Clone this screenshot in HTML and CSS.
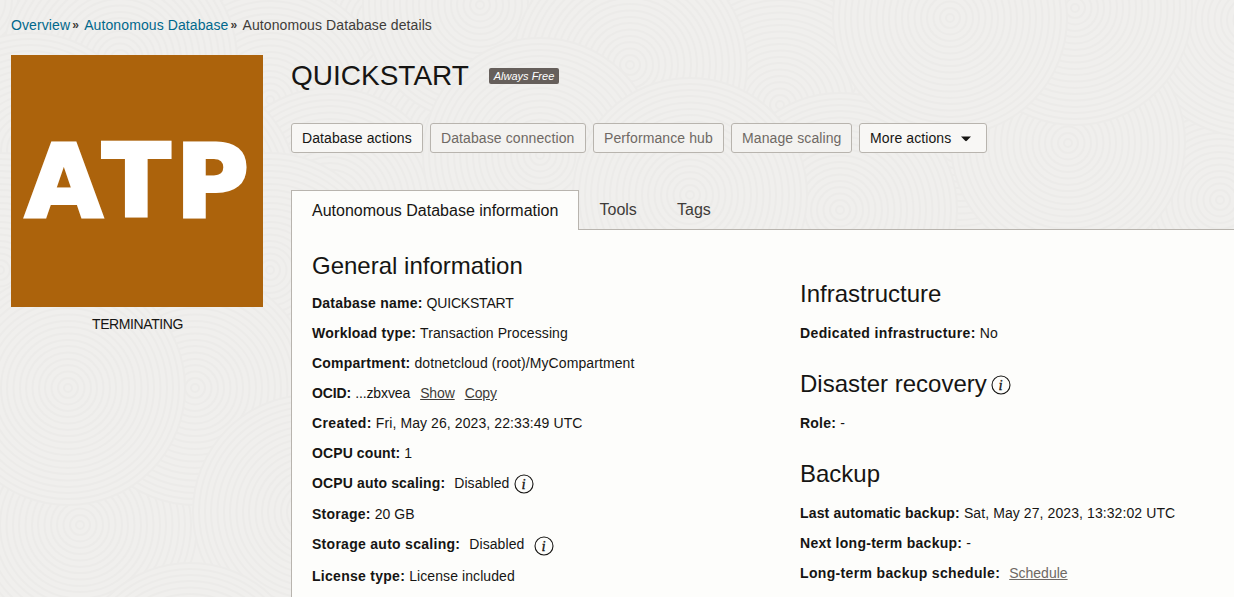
FILE: index.html
```
<!DOCTYPE html>
<html lang="en">
<head>
<meta charset="utf-8">
<title>Autonomous Database details</title>
<link rel="stylesheet" href="styles.css">
</head>
<body>
<svg class="texture" width="1234" height="597" aria-hidden="true">
  <defs>
    <g id="disc">
      <circle r="117" class="base"/>
      <circle r="4"/><circle r="10"/><circle r="16.5"/><circle r="23"/><circle r="29"/><circle r="35.5"/><circle r="42"/><circle r="48"/><circle r="54.5"/><circle r="61"/><circle r="67"/><circle r="73.5"/><circle r="80"/><circle r="86"/><circle r="92.5"/><circle r="99"/><circle r="105"/><circle r="111"/><circle r="117"/>
    </g>
    <g id="cluster">
      <use href="#disc" x="440" y="30"/><use href="#disc" x="30" y="10"/>
      <use href="#disc" x="330" y="110"/><use href="#disc" x="510" y="145"/>
      <use href="#disc" x="180" y="70"/><use href="#disc" x="90" y="160"/>
      <use href="#disc" x="390" y="215"/><use href="#disc" x="240" y="200"/>
    </g>
  </defs>
  <use href="#cluster" x="-60" y="-10"/>
  <use href="#cluster" x="450" y="-5"/>
  <use href="#disc" x="1220" y="200"/>
  <use href="#disc" x="1250" y="20"/>
  <use href="#disc" x="1068" y="143"/>
  <use href="#disc" x="1075" y="8"/>
  <use href="#disc" x="950" y="18"/>
  <use href="#disc" x="0" y="270"/>
  <use href="#disc" x="270" y="270"/>
  <use href="#disc" x="0" y="520"/>
  <use href="#disc" x="80" y="525"/>
  <use href="#disc" x="195" y="388"/>
  <use href="#disc" x="310" y="512"/>
  <use href="#disc" x="68" y="388"/>
  <use href="#disc" x="190" y="680"/>
</svg>
<div class="page">
  <nav class="crumbs"><a>Overview</a><span class="sep">»</span><a>Autonomous Database</a><span class="sep">»</span><span>Autonomous Database details</span></nav>
  <div class="layout">
    <aside class="side">
      <svg class="tile" width="252" height="252" viewBox="0 0 252 252"><text y="161" x="14.4 91.4 165">ATP</text></svg>
      <div class="state">TERMINATING</div>
    </aside>
    <main class="main">
      <header class="title"><h1>QUICKSTART</h1><span class="badge">Always Free</span></header>
      <div class="actions">
        <button class="btn b1">Database actions</button>
        <button class="btn b2 off">Database connection</button>
        <button class="btn b3 off">Performance hub</button>
        <button class="btn b4 off">Manage scaling</button>
        <button class="btn b5">More actions<svg width="10" height="6" viewBox="0 0 10 6"><path d="M0 0.5H10L5.8 4.8Q5 5.6 4.2 4.8Z" fill="#161513"/></svg></button>
      </div>
      <div class="tabs"><div class="tab active">Autonomous Database information</div><div class="tab tools">Tools</div><div class="tab tags">Tags</div></div>
      <div class="panel">
        <section class="left">
          <h2>General information</h2>
          <div class="row name"><b>Database name:</b><span>QUICKSTART</span></div>
          <div class="row workload"><b>Workload type:</b><span>Transaction Processing</span></div>
          <div class="row compartment"><b>Compartment:</b><span>dotnetcloud (root)/MyCompartment</span></div>
          <div class="row ocid"><b>OCID:</b><span>...zbxvea</span><a class="link show">Show</a><a class="link">Copy</a></div>
          <div class="row created"><b>Created:</b><span>Fri, May 26, 2023, 22:33:49 UTC</span></div>
          <div class="row ocpu"><b>OCPU count:</b><span>1</span></div>
          <div class="row tall"><b>OCPU auto scaling:</b><span class="wide">Disabled</span><svg class="info" width="20" height="20" viewBox="0 0 20 20"><circle cx="10" cy="10" r="9"/><text x="7.6" y="14.5">i</text></svg></div>
          <div class="row storage"><b>Storage:</b><span>20 GB</span></div>
          <div class="row taller"><b>Storage auto scaling:</b><span class="wide">Disabled</span><svg class="info far" width="20" height="20" viewBox="0 0 20 20"><circle cx="10" cy="10" r="9"/><text x="7.6" y="14.5">i</text></svg></div>
          <div class="row license"><b>License type:</b><span>License included</span></div>
        </section>
        <section class="right">
          <h2>Infrastructure</h2>
          <div class="row dedicated"><b>Dedicated infrastructure:</b><span>No</span></div>
          <h2>Disaster recovery<svg class="info" width="20" height="20" viewBox="0 0 20 20"><circle cx="10" cy="10" r="9"/><text x="7.6" y="14.5">i</text></svg></h2>
          <div class="row role"><b>Role:</b><span>-</span></div>
          <h2>Backup</h2>
          <div class="row last"><b>Last automatic backup:</b><span>Sat, May 27, 2023, 13:32:02 UTC</span></div>
          <div class="row next"><b>Next long-term backup:</b><span>-</span></div>
          <div class="row longterm"><b>Long-term backup schedule:</b><a class="link muted">Schedule</a></div>
        </section>
      </div>
    </main>
  </div>
</div>
</body>
</html>
```
FILE: styles.css
```
* { box-sizing: border-box; }
body {
  margin: 0;
  height: 597px;
  overflow: hidden;
  background: #f0efed;
  color: #161513;
  font: 14px/20px "Liberation Sans", Arial, sans-serif;
}
.texture { position: absolute; top: 0; left: 0; z-index: -1; }
.texture circle { fill: none; stroke: #ecebe9; stroke-width: 2; }
.texture .base { fill: #f0efed; stroke: none; }
.page { height: 597px; padding: 15px 0 0 11px; overflow: hidden; }
.crumbs { display: flex; height: 40px; color: #3f3c39; white-space: nowrap; letter-spacing: .1px; }
.crumbs a { color: #00688c; }
.sep { width: 14px; padding-left: 2px; font-size: 12px; font-weight: bold; }
.layout { display: flex; gap: 28px; }
.side { width: 252px; flex: none; }
.tile { display: block; background: #ac630c; }
.tile text {
  font: bold 99px "DejaVu Sans", sans-serif;
  fill: #fff;
  stroke: #fff;
  stroke-width: 4px;
  stroke-linejoin: miter;
}
.state { margin-top: 7px; text-align: center; padding-left: 1px; letter-spacing: -.4px; }
.main { flex: 1; min-width: 0; }
.title { display: flex; height: 68px; }
h1 { margin: 1px 0 0; width: 198px; font-size: 28px; line-height: 40px; font-weight: 400; }
.badge {
  width: 70px;
  height: 16px;
  margin-top: 13px;
  border-radius: 2px;
  background: #665f5b;
  color: #fff;
  font-size: 11px;
  line-height: 16px;
  font-style: italic;
  text-align: center;
}
.actions { display: flex; gap: 7px; height: 67px; }
.btn {
  height: 30px;
  padding: 0 0 0 10px;
  border: 1px solid #b8b4ae;
  border-radius: 3px;
  background: #f8f7f5;
  color: #161513;
  font: inherit;
  text-align: left;
  white-space: nowrap;
  letter-spacing: .1px;
}
.btn.off { background: #f3f2f0; color: #6f6964; }
.btn svg { margin: 0 0 1px 10px; vertical-align: middle; }
.b1 { width: 132px; }
.b2 { width: 156px; }
.b3 { width: 131px; }
.b4 { width: 121px; }
.b5 { width: 128px; }
.tabs { display: flex; height: 40px; border-bottom: 1px solid #b8b4ae; font-size: 16px; color: #3f3c39; }
.tab { padding-top: 10px; white-space: nowrap; }
.tab.active {
  width: 288px;
  height: 40px;
  padding-left: 20px;
  border: 1px solid #b8b4ae;
  border-bottom: 0;
  background: #fdfdfb;
  color: #161513;
}
.tools { width: 98px; padding-left: 20.5px; }
.panel { display: flex; height: 380px; padding: 20px 0 0 20px; border-left: 1px solid #b8b4ae; background: #fdfdfb; }
.left { width: 488px; }
.right { padding-top: 28px; }
h2 { display: flex; align-items: center; margin: 0; height: 32px; font-size: 24px; line-height: 32px; font-weight: 400; white-space: nowrap; }
.left h2 { margin-bottom: 6px; }
.right h2 { margin-bottom: 8px; }
.right .row + h2 { margin-top: 20px; }
.row { display: flex; height: 30px; line-height: 30px; white-space: nowrap; }
.row b { margin-right: 4px; letter-spacing: .23px; }
.row span { letter-spacing: .09px; }
.tall { height: 31px; }
.taller { height: 32px; }
.name span { letter-spacing: -.2px; }
.ocid b { letter-spacing: -.1px; }
.ocid span, .ocid a { letter-spacing: -.12px; }
.created b { letter-spacing: .38px; }
.ocpu b { letter-spacing: .1px; }
.row.tall b { letter-spacing: .14px; }
.row.taller b, .license b { letter-spacing: .28px; }
.dedicated b { letter-spacing: .37px; }
.last b { letter-spacing: .16px; }
.next b { letter-spacing: .27px; }
.longterm b { letter-spacing: .34px; }
.wide { margin-left: 5px; }
.link { color: #3f3c39; text-decoration: underline; margin-left: 10px; }
.link.muted { margin-left: 5px; color: #6f6964; }
.info { flex: none; margin: 6px 0 0 5px; }
.info.far { margin-left: 10px; margin-top: 7px; }
h2 .info { margin: 2px 0 0 4px; }
.info circle { fill: none; stroke: #161513; stroke-width: 1.1; }
.info text { font: italic 15px "Liberation Serif", serif; fill: #161513; stroke: #161513; stroke-width: .3px; }
```
